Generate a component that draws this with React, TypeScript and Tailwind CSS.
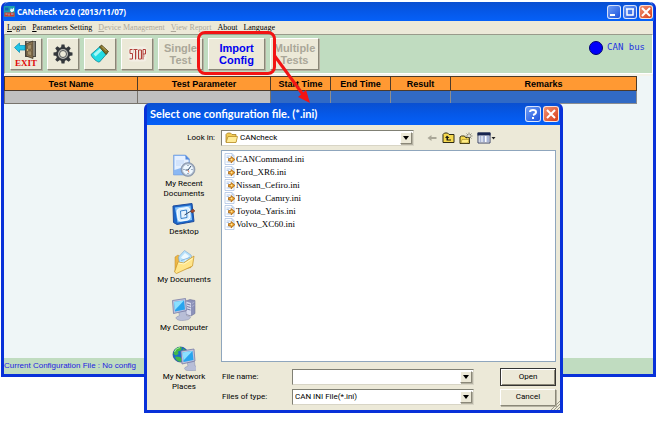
import { useState } from "react";
import type { ReactNode } from "react";

const menus = [
  { label: "Login", enabled: true },
  { label: "Parameters Setting", enabled: true },
  { label: "Device Management", enabled: false },
  { label: "View Report", enabled: false },
  { label: "About", enabled: true },
  { label: "Language", enabled: true },
];

const files = [
  "CANCommand.ini",
  "Ford_XR6.ini",
  "Nissan_Cefiro.ini",
  "Toyota_Camry.ini",
  "Toyota_Yaris.ini",
  "Volvo_XC60.ini",
];

const raised =
  "border border-t-white border-l-white border-r-[#8a8778] border-b-[#8a8778] bg-[#ece9d8] shadow-[1px_1px_0_#b5b2a2]";
const sunken = "border border-t-[#808074] border-l-[#808074] border-r-[#d8d5c6] border-b-[#d8d5c6] bg-white";

/* ---------- Icons ---------- */

function AppLogo() {
  return (
    <svg width="11" height="11" viewBox="0 0 22 22" aria-hidden="true">
      <rect width="22" height="22" rx="2" fill="#1a9fb0" />
      <path d="M2 3h7v6H2z" fill="#1368b8" />
      <path d="M12 9l2-5 2 3 4-4v7l-5 3z" fill="#e9fbff" />
      <path d="M1 13h20v8H1z" fill="#d8352c" />
      <path d="M3 16h4M10 15v4M14 16h5" stroke="#7fd6dd" strokeWidth="2" />
    </svg>
  );
}

function ExitIcon() {
  return (
    <svg width="24" height="19" viewBox="0 0 48 38" aria-hidden="true">
      <path d="M22 2h22v32H22z" fill="#4c4a44" />
      <path d="M25 3h16v29H25z" fill="#b9b5a5" />
      <path d="M24 8l14-6v35l-14-5z" fill="#8c7652" stroke="#3d3426" strokeWidth="1.5" />
      <path d="M27 11l8-3v10l-8 1zM27 22l8 0v10l-8-3z" fill="#a59069" stroke="#5d4d33" />
      <circle cx="27" cy="20" r="1.5" fill="#ffe28a" />
      <path d="M1 15L11 6v5h11v9H11v5z" fill="#20c4e6" stroke="#0b8fb5" strokeWidth="1.5" />
    </svg>
  );
}

function GearIcon() {
  return (
    <svg width="22" height="22" viewBox="-22 -22 44 44" aria-hidden="true">
      <g fill="#34383c">
        {[0, 45, 90, 135, 180, 225, 270, 315].map((angle) => (
          <path key={angle} d="M-4-12L-3-19H3L4-12z" transform={`rotate(${angle})`} />
        ))}
      </g>
      <circle r="12" fill="#b9b9b4" stroke="#34383c" strokeWidth="4" />
      <circle r="7" fill="#ece9d8" stroke="#55585a" strokeWidth="2" />
    </svg>
  );
}

function JarIcon() {
  return (
    <svg width="20" height="20" viewBox="0 0 40 40" aria-hidden="true">
      <path d="M2 21L20 5l14 14-15 17c-3 2-16-9-17-15z" fill="#23dbe3" stroke="#087c91" strokeWidth="1.5" />
      <path d="M7 20L21 8l4 4L11 25z" fill="#a6f8f8" />
      <path d="M19 6l4-4 14 13-5 6z" fill="#7f6f2a" stroke="#3d330d" strokeWidth="1.5" />
      <path d="M24 5l9 9" stroke="#c4b060" strokeWidth="2" />
    </svg>
  );
}

function StopIcon() {
  return (
    <svg width="19" height="16" viewBox="0 0 38 32" fill="none" aria-hidden="true">
      <rect x="1" y="1" width="36" height="30" rx="6" fill="#f3efe5" />
      <g strokeWidth="2">
        <path d="M9 7H4v8h5v11H3M11 7h8M15 7v20M21 8h6v18h-6zM30 27V7h5v9h-5" stroke="#b23e38" />
        <path d="M11 8v6M17 10v16M24 8v17M33 17v5" stroke="#caa79b" strokeWidth="1" />
      </g>
    </svg>
  );
}

function FolderIcon() {
  return (
    <svg width="13" height="12" viewBox="0 0 26 24" aria-hidden="true">
      <path d="M2 20V5l3-3h6l3 3h8v15z" fill="#f3cc55" stroke="#a27a1b" strokeWidth="1.5" />
      <path d="M2 21L6 9h19l-3 12z" fill="#ffeb96" stroke="#b58b24" strokeWidth="1.5" />
    </svg>
  );
}

function IniFileIcon() {
  return (
    <svg width="12" height="12" viewBox="0 0 24 24" className="shrink-0" aria-hidden="true">
      <path d="M2 1h14l4 4v18H2z" fill="#fff" stroke="#a9c0e3" strokeWidth="1.5" />
      <path d="M5 6h8M5 9h5M5 18h7" stroke="#9bb9e4" strokeWidth="1.5" />
      <path d="M16 1v5h4" fill="#d9e6f8" stroke="#8ba7d3" />
      <path d="M9 11h5V7l8 6-8 7v-4H9z" fill="#e89a24" stroke="#a0641a" strokeWidth="1.5" />
      <circle cx="15" cy="13" r="2" fill="#ffe9a0" />
    </svg>
  );
}

function BackIcon() {
  return (
    <svg width="12" height="12" viewBox="0 0 24 24" aria-hidden="true">
      <path d="M3 12l8-6v4h10v4H11v4z" fill="#aaa798" />
    </svg>
  );
}

function UpFolderIcon() {
  return (
    <svg width="13" height="12" viewBox="0 0 26 24" aria-hidden="true">
      <path d="M2 21V5l3-3h6l3 3h10v16z" fill="#f6d94f" stroke="#2e2b14" strokeWidth="2" />
      <path d="M10 7l-4 5h3v5h9v-2h-6v-3h3z" fill="#1b1b10" />
    </svg>
  );
}

function NewFolderIcon() {
  return (
    <svg width="14" height="13" viewBox="0 0 28 26" aria-hidden="true">
      <path d="M2 23V10l3-2h6l2 3h8v12z" fill="#f6d94f" stroke="#3b3514" strokeWidth="2" />
      <path d="M4 22l2-7h14l-2 7z" fill="#ffec82" stroke="#8b7420" />
      <path d="M20 1v14M13 8h14M15 3l10 10M25 3L15 13" stroke="#6d6d64" strokeWidth="1.5" />
      <circle cx="20" cy="8" r="2" fill="#fff" />
    </svg>
  );
}

function ViewIcon() {
  return (
    <svg width="19" height="12" viewBox="0 0 38 24" aria-hidden="true">
      <path d="M2 2h24v20H2z" fill="#fff" stroke="#3b4569" strokeWidth="2" />
      <path d="M1 1h26v6H1z" fill="#17244f" />
      <path d="M5 10h4M11 10h5M19 10h5M5 14h4M11 14h5M19 14h5M5 18h4M11 18h5M19 18h5" stroke="#566fae" strokeWidth="2" />
      <path d="M29 10h8l-4 5z" fill="#222" />
    </svg>
  );
}

function RecentIcon() {
  return (
    <svg width="24" height="24" viewBox="0 0 48 48" aria-hidden="true">
      <path d="M3 2h24l8 8v32H3z" fill="#8bb8f3" stroke="#6690d6" />
      <path d="M5 4h21l7 8v11L5 32z" fill="#e5f0ff" />
      <path d="M27 2v9h8z" fill="#5288dc" />
      <path d="M8 14h16M8 18h16M8 22h10" stroke="#b3cff5" strokeWidth="1.5" />
      <circle cx="32" cy="31" r="14" fill="#98a5b8" stroke="#71819c" />
      <circle cx="32" cy="31" r="11" fill="#eff8ff" stroke="#bac7d8" strokeWidth="2" />
      <path d="M32 22v2M32 38v2M23 31h2M39 31h2" stroke="#526a86" strokeWidth="2" />
      <path d="M38 24l-6 8h-5" fill="none" stroke="#344b6a" strokeWidth="2" />
      <path d="M32 32l2 5" stroke="#e25b2d" strokeWidth="1.5" />
    </svg>
  );
}

function DesktopIcon() {
  return (
    <svg width="24" height="24" viewBox="0 0 48 48" aria-hidden="true">
      <path d="M2 8l38-5 4 36-34 6-7-4z" fill="#1b67c9" stroke="#1e4c9e" strokeWidth="2" />
      <path d="M6 11l31-4 3 29-29 5z" fill="#8cc6fb" />
      <path d="M10 18q1-5 7-5l14-2q4 0 4 5l1 14q0 5-5 6l-14 2q-5 0-5-5z" fill="#d8efff" stroke="#ffffff" strokeWidth="2" />
      <path d="M17 18l12-2 1 15-12 2z" fill="#e6f4ff" stroke="#3a80c8" strokeWidth="2" />
      <path d="M25 26l13-8" stroke="#334866" strokeWidth="2" />
      <path d="M37 18l5-4 4 4-6 4z" fill="#a8482c" stroke="#69351b" />
    </svg>
  );
}

function DocumentsIcon() {
  return (
    <svg width="24" height="24" viewBox="0 0 48 48" aria-hidden="true">
      <path d="M6 14l6-4 5 4 21-3v24L6 43z" fill="#eeb746" stroke="#bd8a24" />
      <path d="M13 14L25 1l13 9 2 12-24 12z" fill="#b8e2fb" stroke="#699bcf" />
      <path d="M18 15l8-9 8 6-7 10z" fill="#eef9ff" />
      <path d="M18 21l18-6" stroke="#88b8df" strokeWidth="2" />
      <path d="M5 44l7-20 11 2 21-14-3 20L9 47z" fill="#ffe58a" stroke="#c89529" strokeWidth="1.5" />
      <path d="M13 26l11 2 17-11" fill="none" stroke="#fff9c9" strokeWidth="2" />
    </svg>
  );
}

function Monitor() {
  return (
    <>
      <path d="M13 27l15-1 1 9 8 3c0 5-9 7-18 7s-13-5-10-7l6-3z" fill="#b8bed7" stroke="#878dac" />
      <path d="M1 5l26-4 2 24-26 6z" fill="#bfc4df" stroke="#7075a2" strokeWidth="1.5" />
      <path d="M4 8l20-3 2 18-20 4z" fill="#28a4ee" />
      <path d="M4 8l20-3L6 24z" fill="#8be0ff" />
    </>
  );
}

function ComputerIcon() {
  return (
    <svg width="24" height="24" viewBox="0 0 48 48" aria-hidden="true">
      <path d="M27 6l9-3 10 2v26l-8 5-11-3z" fill="#8d92b9" stroke="#656991" />
      <path d="M28 7l10 3v25l-10-3z" fill="#d6d9ec" />
      <path d="M30 12l7 2M30 17l7 2M30 22l7 2" stroke="#777da6" strokeWidth="2" />
      <path d="M40 11l5-3M40 17l5-3" stroke="#c9cee4" />
      <Monitor />
    </svg>
  );
}

function NetworkIcon() {
  return (
    <svg width="24" height="25" viewBox="0 0 48 50" aria-hidden="true">
      <circle cx="17" cy="17" r="15" fill="#176cce" stroke="#194694" strokeWidth="1.5" />
      <path d="M7 6q7-6 13-3l-2 6-6 2 1 5-5 3-5-3q0-6 4-10zM8 21l8 1 5 5-4 5q-9-2-11-10zM22 5q8 3 9 11l-5 5-5-6z" fill="#43b748" />
      <path d="M5 12q2-8 11-9" stroke="#a6ef95" strokeWidth="2" fill="none" />
      <g transform="translate(17 5)">
        <Monitor />
      </g>
    </svg>
  );
}

const places = [
  { lines: ["My Recent", "Documents"], icon: <RecentIcon /> },
  { lines: ["Desktop"], icon: <DesktopIcon /> },
  { lines: ["My Documents"], icon: <DocumentsIcon /> },
  { lines: ["My Computer"], icon: <ComputerIcon /> },
  { lines: ["My Network", "Places"], icon: <NetworkIcon /> },
];

/* ---------- Small parts ---------- */

function ToolButton({ children, label, className = "w-8" }: { children: ReactNode; label?: string; className?: string }) {
  return (
    <button
      type="button"
      aria-label={label}
      className={`flex h-8 shrink-0 flex-col items-center justify-center text-center text-[11px] font-bold leading-3 ${raised} ${className}`}
    >
      {children}
    </button>
  );
}

function CaptionButton({ label, danger, children }: { label: string; danger?: boolean; children: ReactNode }) {
  return (
    <button
      type="button"
      aria-label={label}
      className={`flex aspect-square items-center justify-center rounded-[3px] border border-white/80 ${
        danger ? "bg-linear-to-br from-[#f09070] to-[#d83a10]" : "bg-linear-to-br from-[#6f9cf5] to-[#1c50dc]"
      }`}
    >
      <svg width="10" height="10" viewBox="0 0 10 10" fill="none" stroke="white" strokeWidth="2" aria-hidden="true">
        {children}
      </svg>
    </button>
  );
}

function DropArrow() {
  return (
    <span className={`flex h-3 w-3 items-center justify-center ${raised}`}>
      <svg width="6" height="4" viewBox="0 0 6 4" aria-hidden="true">
        <path d="M0 0h6L3 4z" fill="#000" />
      </svg>
    </span>
  );
}

function MainWindow() {
  return (
    <main className="flex flex-1 flex-col rounded-t-md border-x-3 border-b-3 border-[#0831d9] bg-[#eff6f7]">
      <header className="-mx-px flex h-[19px] items-center gap-[2px] rounded-t-md bg-linear-to-b from-[#0a4fd0] via-[#0558e8] to-[#0560f8] px-px">
        <AppLogo />
        <h1 className="flex-1 font-['Open_Sans',sans-serif] text-[8px] font-bold text-white">CANcheck v2.0 (2013/11/07)</h1>
        <div className="flex h-[14px] gap-[2px]">
          <CaptionButton label="Minimize">
            <path d="M1 8h5" />
          </CaptionButton>
          <CaptionButton label="Maximize">
            <path d="M1 2h8M2 2v6h6V2" strokeWidth="1.5" />
          </CaptionButton>
          <CaptionButton label="Close" danger>
            <path d="M1 1l8 8M9 1L1 9" />
          </CaptionButton>
        </div>
      </header>

      <nav className="flex h-[13px] items-center gap-[6px] bg-[#ece9d8] px-[3px] font-['Liberation_Serif',serif] text-[8px]">
        {menus.map((menu) => (
          <button key={menu.label} type="button" disabled={!menu.enabled} className="whitespace-nowrap disabled:text-[#aca899]">
            <span className="underline">{menu.label[0]}</span>
            {menu.label.slice(1)}
          </button>
        ))}
      </nav>

      {/* Toolbar */}
      <div className="flex h-10 items-center gap-[5px] border border-t-[#999b8b] border-l-[#999b8b] border-r-white border-b-white bg-[#c0dcc0] px-[5px]">
        <ToolButton label="Exit">
          <ExitIcon />
          <span className="font-['Liberation_Serif',serif] text-[9px] leading-[9px] text-[#e00808]">EXIT</span>
        </ToolButton>
        <ToolButton label="Settings">
          <GearIcon />
        </ToolButton>
        <ToolButton label="Clear">
          <JarIcon />
        </ToolButton>
        <ToolButton label="Stop">
          <StopIcon />
        </ToolButton>
        <ToolButton className="w-[45px] text-[#aaa798]">
          <span>Single</span>
          <span>Test</span>
        </ToolButton>
        <div className="relative">
          <ToolButton className="w-[57px] text-[#0000f0]">
            <span>Import</span>
            <span>Config</span>
          </ToolButton>
          <span className="pointer-events-none absolute -inset-x-[11px] -top-[7px] -bottom-[5px] z-10 rounded-lg border-3 border-[#f21414]" />
          <svg className="pointer-events-none absolute top-4 left-[64px] z-30" width="42" height="52" viewBox="0 0 42 52" aria-hidden="true">
            <path d="M2 1l30 41" stroke="#f21414" strokeWidth="3" />
            <path d="M38 49l-12-6 8-7z" fill="#f21414" />
          </svg>
        </div>
        <ToolButton className="w-[49px] text-[#aaa798]">
          <span>Multiple</span>
          <span>Tests</span>
        </ToolButton>
        <div className="mr-[2px] mb-3 ml-auto flex items-center gap-1">
          <span className="size-[14px] rounded-full border border-[#000070] bg-[#0000fa]" />
          <span className="font-['DejaVu_Sans_Mono',monospace] text-[9px] text-[#2433e0]">CAN bus</span>
        </div>
      </div>

      {/* Test results */}
      <div className="flex-1 border-t-2 border-[#f4f3ea] pr-4">
        <table className="w-full table-fixed border-collapse text-[9px] leading-3">
          <colgroup>
            <col className="w-[133px]" />
            <col className="w-[133px]" />
            <col className="w-[60px]" />
            <col className="w-[60px]" />
            <col className="w-[60px]" />
            <col />
          </colgroup>
          <thead>
            <tr className="h-[14px] bg-[#ff9933]">
              {["Test Name", "Test Parameter", "Start Time", "End Time", "Result", "Remarks"].map((title) => (
                <th key={title} className="border border-[#4c3a2a] p-0 font-bold">
                  {title}
                </th>
              ))}
            </tr>
          </thead>
          <tbody>
            <tr className="h-[13px]">
              {[0, 1].map((cell) => (
                <td key={cell} className="border border-[#77736c] bg-[#c0c0c0] p-0" />
              ))}
              {[2, 3, 4, 5].map((cell) => (
                <td key={cell} className="border border-[#8b8d91] bg-[#316ac5] p-0" />
              ))}
            </tr>
          </tbody>
        </table>
      </div>

      <footer className="h-4 overflow-hidden bg-[#c0dcc0] text-[8px] leading-4 whitespace-nowrap text-[#2222e0]">
        Current Configuration File : No config
      </footer>
    </main>
  );
}

function OpenDialog() {
  const [fileName, setFileName] = useState("");

  return (
    <section
      role="dialog"
      aria-labelledby="dialog-title"
      className="absolute top-[103px] right-[94px] left-[144px] z-20 rounded-t-md border-x-3 border-b-3 border-[#0831d9] bg-[#ece9d8] font-[Roboto,sans-serif] text-[8px] leading-[10px]"
    >
      <header className="flex h-[22px] items-center gap-[2px] rounded-t-[3px] bg-linear-to-b from-[#0a4fd0] via-[#0558e8] to-[#0560f8] pr-px pl-[3px]">
        <h2 id="dialog-title" className="flex-1 font-[Lato,sans-serif] text-[11px] font-bold text-white">
          Select one configuration file. (*.ini)
        </h2>
        <div className="flex h-4 gap-[2px]">
          <CaptionButton label="Help">
            <path d="M2 3q0-2 3-2t3 2-3 3M5 8v2" />
          </CaptionButton>
          <CaptionButton label="Close" danger>
            <path d="M1 1l8 8M9 1L1 9" />
          </CaptionButton>
        </div>
      </header>

      <form className="flex flex-col gap-1 pt-[5px] pr-1 pb-1" onSubmit={(e) => e.preventDefault()}>
        <div className="flex h-4 items-center">
          <label htmlFor="look-in" className="w-[74px] shrink-0 pr-[6px] text-right">
            Look in:
          </label>
          <div className={`flex h-4 w-[193px] items-center pr-px pl-[3px] ${sunken}`}>
            <FolderIcon />
            <select id="look-in" className="h-[14px] flex-1 appearance-none pl-[2px] outline-none">
              <option>CANcheck</option>
            </select>
            <DropArrow />
          </div>
          <div className="ml-3 flex items-center gap-1">
            <button type="button" aria-label="Back">
              <BackIcon />
            </button>
            <button type="button" aria-label="Up one level">
              <UpFolderIcon />
            </button>
            <button type="button" aria-label="New folder">
              <NewFolderIcon />
            </button>
            <button type="button" aria-label="Views">
              <ViewIcon />
            </button>
          </div>
        </div>

        <div className="flex">
          <ul className="w-[74px] shrink-0 pt-1">
            {places.map((place) => (
              <li key={place.lines[0]} className="h-12">
                <button type="button" className="flex w-full flex-col items-center gap-px">
                  {place.icon}
                  <span>
                    {place.lines.map((line) => (
                      <span key={line} className="block">
                        {line}
                      </span>
                    ))}
                  </span>
                </button>
              </li>
            ))}
          </ul>

          <div className="flex flex-1 flex-col">
            <ul className="min-h-[212px] border border-[#8fa6bd] bg-white pt-px pl-[2px] font-['Liberation_Serif',serif] text-[9px]">
              {files.map((file) => (
                <li key={file}>
                  <button type="button" onClick={() => setFileName(file)} className="flex h-[13px] items-center">
                    <IniFileIcon />
                    {file}
                  </button>
                </li>
              ))}
            </ul>

            <div className="mt-[6px] flex h-[18px] items-center">
              <label htmlFor="file-name" className="w-[71px] shrink-0 pl-px">
                File name:
              </label>
              <div className={`flex h-4 flex-1 items-center pr-px ${sunken}`}>
                <input
                  id="file-name"
                  value={fileName}
                  onChange={(e) => setFileName(e.target.value)}
                  className="h-[14px] min-w-0 flex-1 px-[2px] outline-none"
                />
                <DropArrow />
              </div>
              <button type="submit" className="ml-[26px] h-[18px] w-14 border border-[#333] bg-[#ece9d8] shadow-[inset_1px_1px_0_#fff,inset_-1px_-1px_0_#8a8778]">
                Open
              </button>
            </div>

            <div className="mt-[2px] flex h-[18px] items-center">
              <label htmlFor="file-type" className="w-[71px] shrink-0 pl-px">
                Files of type:
              </label>
              <div className={`flex h-4 flex-1 items-center pr-px ${sunken}`}>
                <select id="file-type" className="h-[14px] flex-1 appearance-none pl-[2px] outline-none">
                  <option>CAN INI File(*.ini)</option>
                </select>
                <DropArrow />
              </div>
              <button type="button" className={`ml-[26px] h-[17px] w-14 ${raised}`}>
                Cancel
              </button>
            </div>
          </div>
        </div>
      </form>

      {/* Resize grip */}
      <svg className="absolute right-0 bottom-0" width="9" height="9" viewBox="0 0 9 9" stroke="#9c9987" aria-hidden="true">
        <path d="M0 9l9-9M3 9l6-6M6 9l3-3" />
      </svg>
    </section>
  );
}

export default function App() {
  return (
    <div className="relative flex min-h-screen flex-col bg-white px-px pt-[2px] pb-[46px] font-['Liberation_Sans',sans-serif] text-black">
      <MainWindow />
      <OpenDialog />
    </div>
  );
}
